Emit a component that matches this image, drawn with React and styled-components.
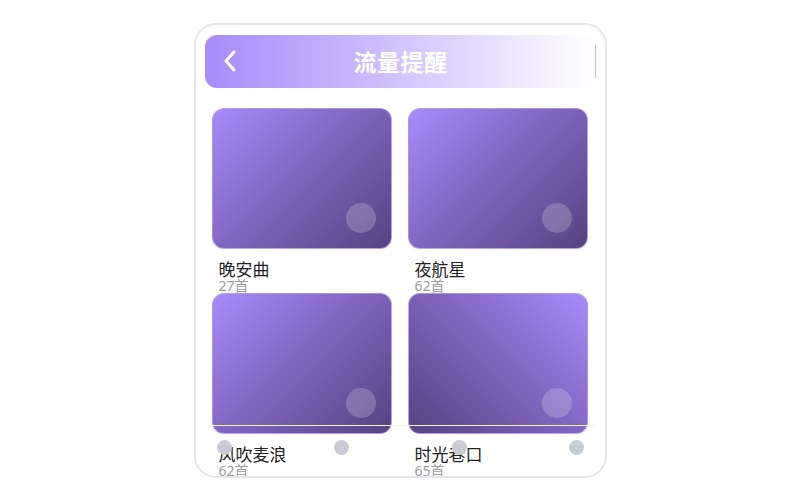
import styled, { createGlobalStyle } from "styled-components";

const GlobalStyle = createGlobalStyle`
  html, body {
    margin: 0;
    padding: 0;
    background: #ffffff;
  }
  body {
    font-family: "Noto Sans", "Noto Sans CJK SC", sans-serif;
  }
`;

const Page = styled.div`
  width: 800px;
  height: 500px;
  display: flex;
  align-items: center;
  justify-content: center;
`;

const Phone = styled.div`
  position: relative;
  width: 392px;
  height: 441px;
  border: 2px solid #e6e6ea;
  border-radius: 22px;
  background: #ffffff;
  overflow: hidden;
  padding: 10px 8px 0 9px;
  box-sizing: content-box;
`;

const Header = styled.div`
  position: relative;
  height: 53px;
  border-radius: 12px;
  background: linear-gradient(90deg, #a78bfa 0%, #c9b8fc 40%, #f3efff 85%, #ffffff 100%);
  display: flex;
  align-items: center;
  justify-content: center;

  &::after {
    content: "";
    position: absolute;
    right: 1px;
    top: 10px;
    bottom: 10px;
    width: 1px;
    background: #c8b8fb;
  }
`;

const BackButton = styled.button`
  position: absolute;
  left: 16px;
  top: 50%;
  transform: translateY(-50%);
  width: 18px;
  height: 24px;
  padding: 0;
  border: 0;
  background: none;
  display: flex;
  align-items: center;
  justify-content: center;
`;

const Title = styled.h1`
  margin: 0;
  font-family: "Noto Sans CJK SC", sans-serif;
  font-size: 23px;
  font-weight: 700;
  color: #ffffff;
  letter-spacing: 0.5px;
`;

const Grid = styled.div`
  display: grid;
  grid-template-columns: 180px 180px;
  grid-auto-rows: 185px;
  column-gap: 16px;
  padding: 20px 0 0 7px;
`;

const Item = styled.div`
  display: flex;
  flex-direction: column;
`;

const Cover = styled.div`
  position: relative;
  height: 142px;
  border-radius: 12px;
  box-sizing: border-box;
  border: 1px solid rgba(196, 181, 253, 0.7);
  background: linear-gradient(${(p) => p.$angle}deg, #a78bfa 0%, #8267c2 45%, #564381 100%);
`;

const PlayDot = styled.div`
  position: absolute;
  right: 15px;
  bottom: 15px;
  width: 30px;
  height: 30px;
  border-radius: 50%;
  background: rgba(255, 255, 255, 0.2);
`;

const Name = styled.div`
  margin-top: 10px;
  padding-left: 7px;
  font-family: "Noto Sans CJK SC", sans-serif;
  font-size: 17px;
  line-height: 20px;
  color: #222222;
`;

const Count = styled.div`
  padding-left: 7px;
  font-family: "Noto Sans", "Noto Sans CJK SC", sans-serif;
  font-size: 14px;
  line-height: 14px;
  color: #9b9b9b;
`;

const TabBar = styled.div`
  position: absolute;
  left: 11px;
  bottom: 0;
  width: 388px;
  height: 51px;
  box-sizing: border-box;
  border-top: 1px solid #f4f4f6;
  padding: 14px 10px 0;
  display: flex;
  justify-content: space-between;
  align-items: flex-start;
`;

const TabDot = styled.div`
  width: 15px;
  height: 15px;
  border-radius: 50%;
  background: #c9cdd3;
`;

const playlists = [
  { name: "晚安曲", count: 27, angle: 135 },
  { name: "夜航星", count: 62, angle: 135 },
  { name: "风吹麦浪", count: 62, angle: 135 },
  { name: "时光巷口", count: 65, angle: 225 },
];

const App = () => {
  return (
    <>
      <GlobalStyle />
      <Page>
        <Phone>
          <Header>
            <BackButton>
              <svg width="14" height="22" viewBox="0 0 14 22" fill="none">
                <path
                  d="M11 2 L3 11 L11 20"
                  stroke="#ffffff"
                  strokeWidth="3"
                  strokeLinecap="round"
                  strokeLinejoin="round"
                />
              </svg>
            </BackButton>
            <Title>流量提醒</Title>
          </Header>
          <Grid>
            {playlists.map((item) => (
              <Item key={item.name}>
                <Cover $angle={item.angle}>
                  <PlayDot />
                </Cover>
                <Name>{item.name}</Name>
                <Count>{item.count}首</Count>
              </Item>
            ))}
          </Grid>
          <TabBar>
            <TabDot />
            <TabDot />
            <TabDot />
            <TabDot />
          </TabBar>
        </Phone>
      </Page>
    </>
  );
};

export default App;
